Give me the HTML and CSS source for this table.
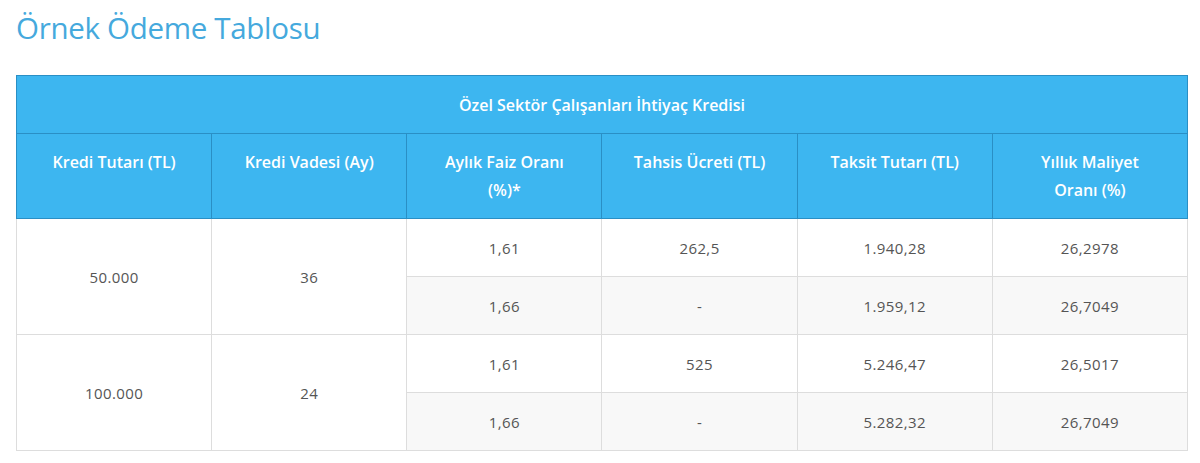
FILE: index.html
```html
<!DOCTYPE html>
<html lang="tr">
<head>
<meta charset="utf-8">
<link rel="stylesheet" href="styles.css">
</head>
<body>
<h1 class="title">Örnek Ödeme Tablosu</h1>
<table class="pay">
  <thead>
    <tr><th class="cap" colspan="6">Özel Sektör Çalışanları İhtiyaç Kredisi</th></tr>
    <tr class="heads">
      <th>Kredi Tutarı (TL)</th>
      <th>Kredi Vadesi (Ay)</th>
      <th>Aylık Faiz Oranı<br>(%)*</th>
      <th>Tahsis Ücreti (TL)</th>
      <th>Taksit Tutarı (TL)</th>
      <th>Yıllık Maliyet<br>Oranı (%)</th>
    </tr>
  </thead>
  <tbody>
    <tr>
      <td rowspan="2">50.000</td>
      <td rowspan="2">36</td>
      <td>1,61</td><td>262,5</td><td>1.940,28</td><td>26,2978</td>
    </tr>
    <tr class="alt">
      <td>1,66</td><td>-</td><td>1.959,12</td><td>26,7049</td>
    </tr>
    <tr>
      <td rowspan="2">100.000</td>
      <td rowspan="2">24</td>
      <td>1,61</td><td>525</td><td>5.246,47</td><td>26,5017</td>
    </tr>
    <tr class="alt">
      <td>1,66</td><td>-</td><td>5.282,32</td><td>26,7049</td>
    </tr>
  </tbody>
</table>
</body>
</html>
```

FILE: styles.css
```css
html, body {
  margin: 0;
  padding: 0;
  background: #ffffff;
}
body {
  padding: 0 12px 0 16px;
  font-family: "Open Sans", "Liberation Sans", sans-serif;
}
.title {
  margin: 0;
  padding-top: 9px;
  height: 75px;
  box-sizing: border-box;
  font-family: "Open Sans", sans-serif;
  font-weight: 400;
  font-size: 29.5px;
  line-height: 38px;
  color: #45a9dd;
  letter-spacing: -0.3px;
}
.pay {
  width: 1172px;
  border-collapse: collapse;
  table-layout: fixed;
}
.pay th {
  background: #3db6f0;
  color: #ffffff;
  font-family: "Open Sans", sans-serif;
  font-weight: 600;
  font-size: 16px;
  border: 1px solid #2a8fc5;
  text-align: center;
}
.pay th.cap {
  height: 57px;
  padding: 0;
}
.pay .heads th {
  height: 85px;
  vertical-align: top;
  line-height: 28px;
  padding: 14px 10px 0;
  box-sizing: border-box;
}
.pay td {
  border: 1px solid #dddddd;
  text-align: center;
  height: 57px;
  padding: 0;
  font-size: 15px;
  letter-spacing: 0.4px;
  color: #555555;
  background: #ffffff;
}
.pay tr.alt td {
  background: #f8f8f8;
}
```
